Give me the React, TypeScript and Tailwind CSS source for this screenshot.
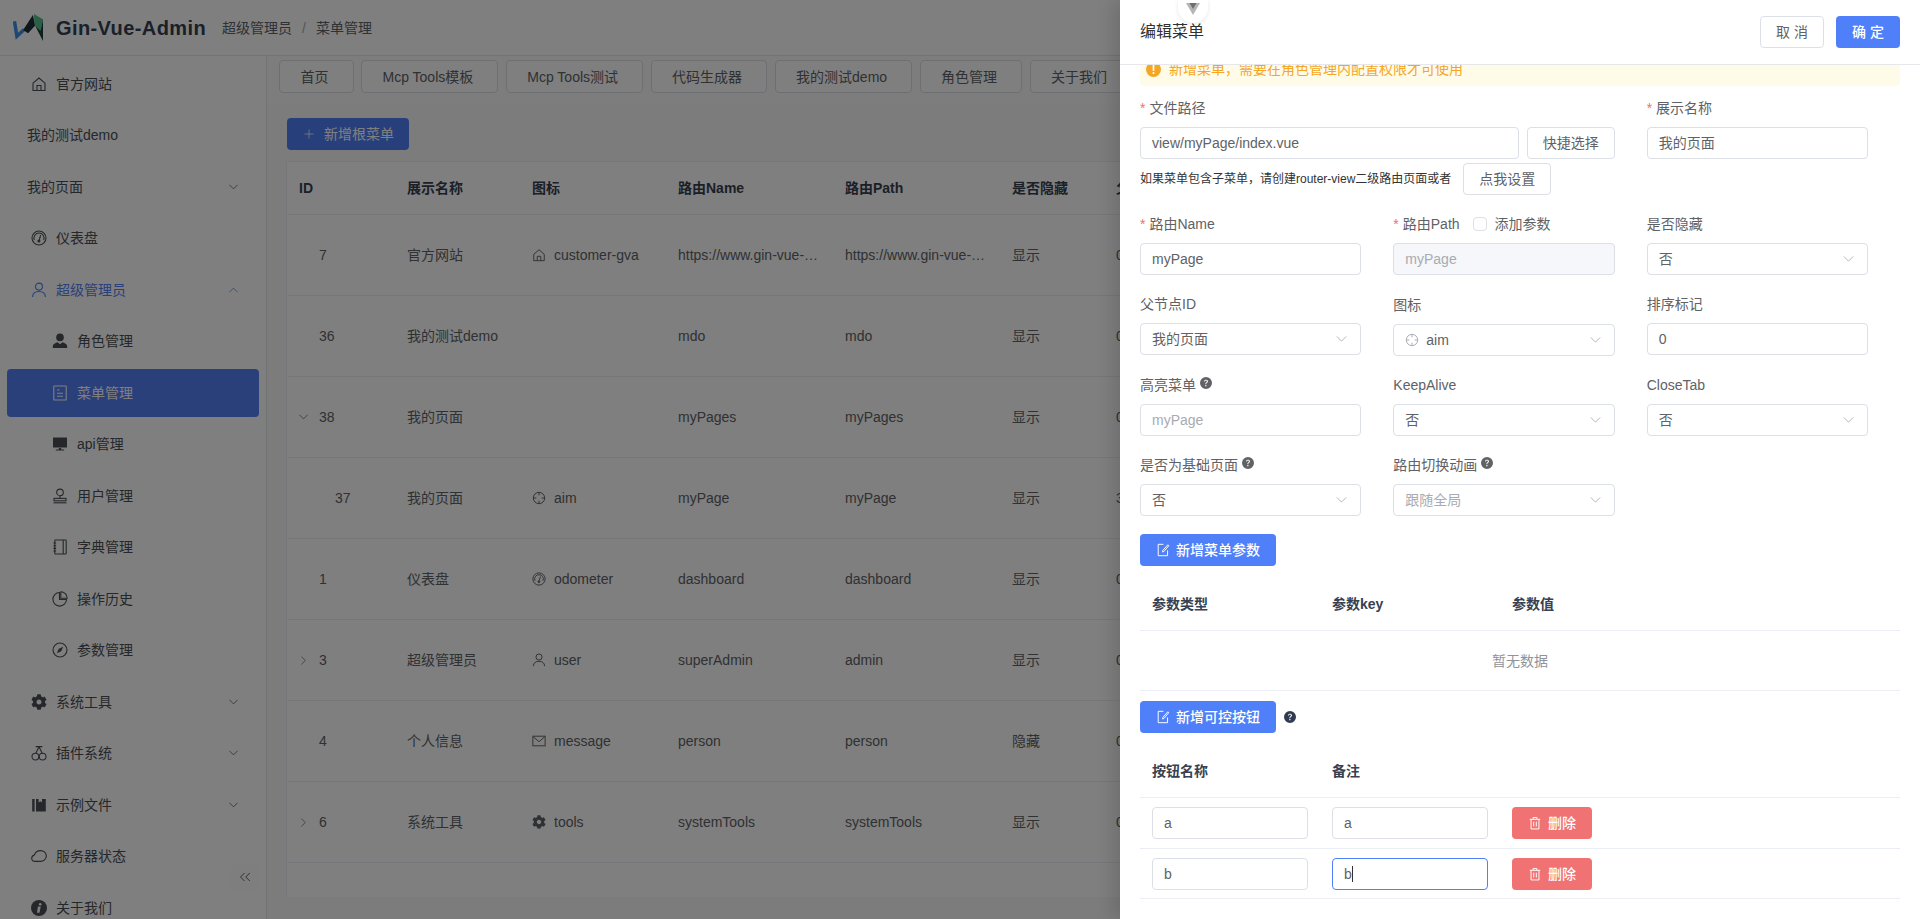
import React from "react"
import { ChevronsLeft, Plus } from "lucide-react"
import { FaCog } from "react-icons/fa"
import { BsQuestionCircleFill } from "react-icons/bs"

type IconProps = { className?: string }

const Svg = ({ className, children }: IconProps & { children: React.ReactNode }) => (
  <svg viewBox="0 0 16 16" fill="none" stroke="currentColor" strokeWidth="1.1" className={className}>
    {children}
  </svg>
)

const ArrowDown = ({ className }: IconProps) => (
  <svg viewBox="0 0 12 7" fill="none" stroke="currentColor" strokeWidth="1" className={className}>
    <path d="M.5.5 6 6l5.500-5.500" />
  </svg>
)
const ArrowUp = ({ className }: IconProps) => (
  <svg viewBox="0 0 12 7" fill="none" stroke="currentColor" strokeWidth="1" className={className}>
    <path d="M.5 6.500 6 1l5.500 5.500" />
  </svg>
)
const ArrowRight = ({ className }: IconProps) => (
  <svg viewBox="0 0 7 12" fill="none" stroke="currentColor" strokeWidth="1" className={className}>
    <path d="M.5.500 6 6 .5 11.500" />
  </svg>
)

const HomeIcon = ({ className }: IconProps) => (
  <Svg className={className}>
    <path d="M2 7.200 8 2l6 5.200V14.500H2z" />
    <path d="M6 14.500V9.500h4v5" />
  </Svg>
)
const OdometerIcon = ({ className }: IconProps) => (
  <Svg className={className}>
    <circle cx="8" cy="8" r="7" />
    <path d="M3.400 10a5 5 0 1 1 9.200 0" />
    <path d="M9.600 5.200 8.300 10" />
    <circle cx="7.900" cy="11" r="1" fill="currentColor" />
  </Svg>
)
const UserIcon = ({ className }: IconProps) => (
  <Svg className={className}>
    <circle cx="8" cy="4.600" r="3.500" />
    <path d="M1.600 15c0-3.600 2.600-5.500 6.400-5.500s6.400 1.900 6.400 5.500" />
  </Svg>
)
const AvatarIcon = ({ className }: IconProps) => (
  <svg viewBox="0 0 16 16" fill="currentColor" className={className}>
    <circle cx="8" cy="4.400" r="3.800" />
    <path d="M.8 15v-1.600c0-2.400 2.800-3.600 4.800-4.200L8 11.200l2.400-2c2 .6 4.800 1.800 4.800 4.200V15z" />
  </svg>
)
const DocumentIcon = ({ className }: IconProps) => (
  <Svg className={className}>
    <rect x="1.800" y="1" width="12.400" height="14" rx="0.500" />
    <path d="M5 5h2.500M5 8.200h6M5 11.200h6" />
  </Svg>
)
const MonitorIcon = ({ className }: IconProps) => (
  <svg viewBox="0 0 16 16" fill="currentColor" className={className}>
    <rect x="1" y="1.500" width="14" height="10" />
    <path d="M6.800 12h2.400v1.400h3v1H3.800v-1h3z" />
  </svg>
)
const StampIcon = ({ className }: IconProps) => (
  <Svg className={className}>
    <circle cx="8" cy="4.400" r="3.300" />
    <path d="M8 7.700v2.600" />
    <rect x="2" y="10.400" width="12" height="2.400" />
    <path d="M1.500 14.800h13" />
  </Svg>
)
const NotebookIcon = ({ className }: IconProps) => (
  <Svg className={className}>
    <rect x="2.800" y="1" width="11.400" height="14" rx="0.500" />
    <path d="M11.200 1v14M1.400 4h2.800M1.400 6.700h2.800M1.400 9.400h2.800M1.400 12h2.800" />
  </Svg>
)
const PieIcon = ({ className }: IconProps) => (
  <Svg className={className}>
    <path d="M7.500 1.500a6.800 6.800 0 1 0 7 7H7.500z" />
    <path d="M8.800 .8v6.400h6.400A6.400 6.400 0 0 0 8.800 .8z" />
  </Svg>
)
const CompassIcon = ({ className }: IconProps) => (
  <Svg className={className}>
    <circle cx="8" cy="8" r="7" />
    <path d="M11.200 4.800 9.200 9.200 4.800 11.200l2-4.400z" fill="currentColor" stroke="none" />
  </Svg>
)
const CherryIcon = ({ className }: IconProps) => (
  <Svg className={className}>
    <circle cx="4.400" cy="11.600" r="3.400" />
    <circle cx="11.600" cy="11.600" r="3.400" />
    <path d="M8 1.800 4.800 8.200M8 1.800l3.200 6.400M4.600 1.600h6.800" />
  </Svg>
)
const CollectionIcon = ({ className }: IconProps) => (
  <svg viewBox="0 0 16 16" fill="currentColor" className={className}>
    <rect x="1.200" y="2" width="2.400" height="12.500" />
    <path d="M5 2h2.600v3.400l1.700-1.200L11 5.400V2h3.800v12.500H5z" />
  </svg>
)
const CloudIcon = ({ className }: IconProps) => (
  <Svg className={className}>
    <path d="M4.200 13.400C2 13.400.7 12 .7 10.300c0-1.600 1.100-2.800 2.600-3.200C4.200 4.400 6.500 2.600 9.500 2.600c3.400 0 5.800 2.400 5.800 5.400 0 3.200-2.700 5.400-5.800 5.400z" />
  </Svg>
)
const InfoIcon = ({ className }: IconProps) => (
  <svg viewBox="0 0 16 16" className={className}>
    <circle cx="8" cy="8" r="8" fill="currentColor" />
    <circle cx="9.200" cy="4.200" r="1.300" fill="#fff" />
    <path d="M6.900 6.600h2.800L8.500 12.800H6z" fill="#fff" />
  </svg>
)
const AimIcon = ({ className }: IconProps) => (
  <Svg className={className}>
    <circle cx="8" cy="8" r="6.500" />
    <path d="M8 1.500V5M8 11v3.500M1.500 8H5M11 8h3.500" />
  </Svg>
)
const MessageIcon = ({ className }: IconProps) => (
  <Svg className={className}>
    <rect x="1" y="2.500" width="14" height="11" />
    <path d="M1.500 3.200 8 8.800l6.500-5.600" />
  </Svg>
)
const EditIcon = ({ className }: IconProps) => (
  <Svg className={className}>
    <path d="M13.200 8.500v6H2.500v-13h6" />
    <path d="M13.500 2 7.800 8.500l-.3 1.700 1.600-.5 5.400-6.500z" />
  </Svg>
)
const DeleteIcon = ({ className }: IconProps) => (
  <Svg className={className}>
    <path d="M2 3.800h12M5.800 3.800V1.800h4.400v2M3.500 3.800v11h9v-11M6.500 6.500v5.500M9.500 6.500v5.500" />
  </Svg>
)
const WarningIcon = ({ className }: IconProps) => (
  <svg viewBox="0 0 16 16" className={className}>
    <circle cx="8" cy="8" r="8" fill="currentColor" />
    <rect x="7.100" y="3.200" width="1.800" height="6.300" rx="0.500" fill="#fff" />
    <circle cx="8" cy="11.700" r="1.100" fill="#fff" />
  </svg>
)
const GvaLogo = () => (
  <svg viewBox="5 5 32 30" className="h-[29px] w-[31px]">
    <path d="M6.500 13.500 9 29l7.500-7" fill="none" stroke="#3f8fe8" strokeWidth="3.600" />
    <path d="M15.500 22.500 25.500 7l2.500 11-7.500 8z" fill="#1f2f38" />
    <path d="M26.500 6l9.500 5.500-2.500 13L27.500 18z" fill="#55c091" />
    <path d="M36 11.500V34l-8-15.500 5.500 5z" fill="#1d3f3a" />
  </svg>
)

type MenuItem = {
  label: string
  icon?: React.ComponentType<IconProps>
  sub?: boolean
  arrow?: "down" | "up"
  active?: boolean
  current?: boolean
}

const menu: MenuItem[] = [
  { label: "官方网站", icon: HomeIcon },
  { label: "我的测试demo" },
  { label: "我的页面", arrow: "down" },
  { label: "仪表盘", icon: OdometerIcon },
  { label: "超级管理员", icon: UserIcon, arrow: "up", active: true },
  { label: "角色管理", icon: AvatarIcon, sub: true },
  { label: "菜单管理", icon: DocumentIcon, sub: true, current: true },
  { label: "api管理", icon: MonitorIcon, sub: true },
  { label: "用户管理", icon: StampIcon, sub: true },
  { label: "字典管理", icon: NotebookIcon, sub: true },
  { label: "操作历史", icon: PieIcon, sub: true },
  { label: "参数管理", icon: CompassIcon, sub: true },
  { label: "系统工具", icon: FaCog, arrow: "down" },
  { label: "插件系统", icon: CherryIcon, arrow: "down" },
  { label: "示例文件", icon: CollectionIcon, arrow: "down" },
  { label: "服务器状态", icon: CloudIcon },
  { label: "关于我们", icon: InfoIcon },
]

const tabs = ["首页", "Mcp Tools模板", "Mcp Tools测试", "代码生成器", "我的测试demo", "角色管理", "关于我们"]

type Row = {
  id: string
  name: string
  icon?: React.ComponentType<IconProps>
  iconName?: string
  routeName: string
  routePath: string
  hidden: string
  parent: string
  expand?: "down" | "right"
  child?: boolean
}

const rows: Row[] = [
  { id: "7", name: "官方网站", icon: HomeIcon, iconName: "customer-gva", routeName: "https://www.gin-vue-…", routePath: "https://www.gin-vue-…", hidden: "显示", parent: "0" },
  { id: "36", name: "我的测试demo", routeName: "mdo", routePath: "mdo", hidden: "显示", parent: "0" },
  { id: "38", name: "我的页面", routeName: "myPages", routePath: "myPages", hidden: "显示", parent: "0", expand: "down" },
  { id: "37", name: "我的页面", icon: AimIcon, iconName: "aim", routeName: "myPage", routePath: "myPage", hidden: "显示", parent: "3", child: true },
  { id: "1", name: "仪表盘", icon: OdometerIcon, iconName: "odometer", routeName: "dashboard", routePath: "dashboard", hidden: "显示", parent: "0" },
  { id: "3", name: "超级管理员", icon: UserIcon, iconName: "user", routeName: "superAdmin", routePath: "admin", hidden: "显示", parent: "0", expand: "right" },
  { id: "4", name: "个人信息", icon: MessageIcon, iconName: "message", routeName: "person", routePath: "person", hidden: "隐藏", parent: "0" },
  { id: "6", name: "系统工具", icon: FaCog, iconName: "tools", routeName: "systemTools", routePath: "systemTools", hidden: "显示", parent: "0", expand: "right" },
]

const Sidebar = () => (
  <aside className="relative flex w-[267px] shrink-0 flex-col gap-[3.5px] overflow-hidden border-r border-[#e5e7eb] bg-white pt-[3.5px] text-sm text-[#4b4f55]">
    {menu.map((item) => {
      const Icon = item.icon
      return (
        <div
          key={item.label}
          className={`mx-[7px] flex h-12 shrink-0 items-center rounded-sm ${
            item.sub ? "pl-[45px]" : Icon ? "pl-6" : "pl-5"
          } ${item.current ? "bg-[#5480f5] text-white" : ""} ${item.active ? "text-[#5480f5]" : ""}`}
        >
          {Icon && <Icon className="mr-[9px] h-4 w-4 shrink-0" />}
          <span>{item.label}</span>
          {item.arrow === "down" && <ArrowDown className="ml-auto mr-[21px] h-[6px] w-[9px]" />}
          {item.arrow === "up" && <ArrowUp className="ml-auto mr-[21px] h-[6px] w-[9px]" />}
        </div>
      )
    })}
    <div className="absolute left-[231px] top-[807px] flex h-7 w-7 items-center justify-center rounded bg-[#fcfcfc] text-[#374151]">
      <ChevronsLeft className="h-[18px] w-[18px]" strokeWidth={1.1} />
    </div>
  </aside>
)

const MenuTable = () => (
  <div className="ml-[19px] mt-[11px] h-[736px] overflow-hidden">
    <table className="w-[1000px] table-fixed border-separate border-spacing-0 border-l border-t border-[#ebeef5] bg-white text-sm text-[#606266]">
      <colgroup>
        <col className="w-[108px]" />
        <col className="w-[125px]" />
        <col className="w-[146px]" />
        <col className="w-[167px]" />
        <col className="w-[167px]" />
        <col className="w-[104px]" />
        <col className="w-[183px]" />
      </colgroup>
      <thead>
        <tr className="font-bold text-[#374151]">
          {["ID", "展示名称", "图标", "路由Name", "路由Path", "是否隐藏", "父节点"].map((title) => (
            <th key={title} className="h-[53px] border-b border-[#ebeef5] px-3 text-left font-bold">
              {title}
            </th>
          ))}
        </tr>
      </thead>
      <tbody>
        {rows.map((row) => {
          const Icon = row.icon
          return (
            <tr key={row.id}>
              <td className="h-[81px] border-b border-[#ebeef5] px-3">
                <div className={`relative flex items-center ${row.child ? "pl-9" : "pl-5"}`}>
                  {row.expand === "down" && <ArrowDown className="absolute left-0 h-[6px] w-[9px]" />}
                  {row.expand === "right" && <ArrowRight className="absolute left-[2px] h-[9px] w-[5px]" />}
                  {row.id}
                </div>
              </td>
              <td className="border-b border-[#ebeef5] px-3">{row.name}</td>
              <td className="border-b border-[#ebeef5] px-3">
                {Icon && (
                  <div className="flex items-center gap-2">
                    <Icon className="h-3.5 w-3.5" />
                    {row.iconName}
                  </div>
                )}
              </td>
              <td className="whitespace-nowrap border-b border-[#ebeef5] px-3">{row.routeName}</td>
              <td className="whitespace-nowrap border-b border-[#ebeef5] px-3">{row.routePath}</td>
              <td className="border-b border-[#ebeef5] px-3">{row.hidden}</td>
              <td className="border-b border-[#ebeef5] px-3">{row.parent}</td>
            </tr>
          )
        })}
        <tr>
          <td className="h-[81px]" />
          <td />
          <td className="px-3">
            <HomeIcon className="h-3.5 w-3.5" />
          </td>
        </tr>
      </tbody>
    </table>
  </div>
)

const Label = ({ children, required, help, tall }: { children: React.ReactNode; required?: boolean; help?: boolean; tall?: boolean }) => (
  <div className={`mb-2 flex items-center text-sm text-[#606266] ${tall ? "h-[23px]" : "h-[22px]"}`}>
    {required && <span className="mr-1 text-[#f56c6c]">*</span>}
    {children}
    {help && <BsQuestionCircleFill className="mb-1 ml-1 h-3 w-3 text-[#606266]" />}
  </div>
)

const Input = ({ value, placeholder, disabled, className = "" }: { value?: string; placeholder?: boolean; disabled?: boolean; className?: string }) => (
  <div
    className={`flex h-8 items-center rounded border border-[#dcdfe6] px-[11px] text-sm ${
      disabled ? "bg-[#f5f7fa] text-[#a8abb2]" : placeholder ? "bg-white text-[#a8abb2]" : "bg-white text-[#606266]"
    } ${className}`}
  >
    {value}
  </div>
)

const Select = ({ value, placeholder, icon }: { value: string; placeholder?: boolean; icon?: boolean }) => (
  <div className={`flex h-8 items-center rounded border border-[#dcdfe6] bg-white pl-[11px] pr-[13px] text-sm ${placeholder ? "text-[#a8abb2]" : "text-[#606266]"}`}>
    {icon && <AimIcon className="mr-[7px] h-3.5 w-3.5 text-[#a8abb2]" />}
    {value}
    <ArrowDown className="ml-auto h-[6px] w-[11px] text-[#a8abb2]" />
  </div>
)

const Button = ({ children, className = "" }: { children: React.ReactNode; className?: string }) => (
  <button className={`flex h-8 items-center justify-center rounded border border-[#dcdfe6] bg-white text-sm text-[#606266] ${className}`}>
    {children}
  </button>
)

const PrimaryButton = ({ children }: { children: string }) => (
  <button className="flex h-8 w-[136px] items-center justify-center gap-1.5 rounded bg-[#4f80f9] text-sm font-medium text-white">
    <EditIcon className="h-3.5 w-3.5" />
    {children}
  </button>
)

const DeleteButton = () => (
  <button className="flex h-8 w-20 items-center justify-center gap-1.5 rounded bg-[#f07272] text-sm font-medium text-white">
    <DeleteIcon className="h-3.5 w-3.5" />
    删除
  </button>
)

const Drawer = () => (
  <div className="absolute inset-y-0 right-0 z-20 flex w-[800px] flex-col bg-white shadow-[-8px_0_16px_rgba(0,0,0,0.12)]">
    <div className="absolute left-[58px] top-0 z-10 flex h-[23px] w-[30px] justify-center rounded-b-full bg-white pt-[3px] shadow-[0_1px_4px_rgba(0,0,0,0.1)]">
      <svg viewBox="0 0 14 12" className="h-3 w-3.5">
        <path d="M0 0h14L7 12z" fill="#b5b5b5" />
        <path d="M3.500 0h7L7 6z" fill="#6e6e6e" />
      </svg>
    </div>
    <div className="flex h-[65px] shrink-0 items-center justify-between border-b border-[#e5e7eb] px-5">
      <span className="text-base text-[#303133]">编辑菜单</span>
      <div className="flex gap-3">
        <Button className="w-16">取 消</Button>
        <button className="flex h-8 w-16 items-center justify-center rounded bg-[#4f80f9] text-sm font-medium text-white">确 定</button>
      </div>
    </div>
    <div className="flex-1 overflow-hidden px-5">
      <div className="-mt-[13px] flex h-[34px] items-center rounded bg-[#fffbe9] pl-1.5 text-sm text-[#f5a623]">
        <WarningIcon className="mr-2 h-[15px] w-[15px]" />
        新增菜单，需要在角色管理内配置权限才可使用
      </div>

      <div className="mt-[11px] grid w-[728px] grid-cols-3 gap-x-8 gap-y-[18px]">
        <div className="col-span-2">
          <Label required>文件路径</Label>
          <div className="flex gap-2">
            <Input value="view/myPage/index.vue" className="w-[380px]" />
            <Button className="w-[88px]">快捷选择</Button>
          </div>
          <div className="mt-1 flex items-center">
            <span className="text-xs text-[#333]">如果菜单包含子菜单，请创建router-view二级路由页面或者</span>
            <Button className="ml-3 w-[88px]">点我设置</Button>
          </div>
        </div>
        <div>
          <Label required>展示名称</Label>
          <Input value="我的页面" />
        </div>

        <div>
          <Label required>路由Name</Label>
          <Input value="myPage" />
        </div>
        <div>
          <Label required>
            路由Path
            <span className="ml-[13px] mr-2 h-3.5 w-3.5 rounded-sm border border-[#dcdfe6] bg-white" />
            添加参数
          </Label>
          <Input value="myPage" disabled />
        </div>
        <div>
          <Label>是否隐藏</Label>
          <Select value="否" />
        </div>

        <div>
          <Label>父节点ID</Label>
          <Select value="我的页面" />
        </div>
        <div>
          <Label tall>图标</Label>
          <Select value="aim" icon />
        </div>
        <div>
          <Label>排序标记</Label>
          <Input value="0" />
        </div>

        <div>
          <Label help>高亮菜单</Label>
          <Input value="myPage" placeholder />
        </div>
        <div>
          <Label>KeepAlive</Label>
          <Select value="否" />
        </div>
        <div>
          <Label>CloseTab</Label>
          <Select value="否" />
        </div>

        <div>
          <Label help>是否为基础页面</Label>
          <Select value="否" />
        </div>
        <div>
          <Label help>路由切换动画</Label>
          <Select value="跟随全局" placeholder />
        </div>
      </div>

      <div className="mt-[18px]">
        <PrimaryButton>新增菜单参数</PrimaryButton>
      </div>

      <div className="mt-3 text-sm">
        <div className="grid h-[53px] grid-cols-[180px_180px_180px_1fr] items-center border-b border-[#ebeef5] font-bold text-[#374151]">
          <span className="px-3">参数类型</span>
          <span className="px-3">参数key</span>
          <span className="px-3">参数值</span>
        </div>
        <div className="flex h-[60px] items-center justify-center border-b border-[#ebeef5] text-[#909399]">暂无数据</div>
      </div>

      <div className="mt-[10px] flex items-center gap-2">
        <PrimaryButton>新增可控按钮</PrimaryButton>
        <BsQuestionCircleFill className="h-3 w-3 text-[#303a50]" />
      </div>

      <div className="mt-3 text-sm">
        <div className="grid h-[53px] grid-cols-[180px_180px_180px_1fr] items-center border-b border-[#ebeef5] font-bold text-[#374151]">
          <span className="px-3">按钮名称</span>
          <span className="px-3">备注</span>
        </div>
        <div className="grid h-[51px] grid-cols-[180px_180px_180px_1fr] items-center border-b border-[#ebeef5] px-3">
          <Input value="a" className="w-[156px]" />
          <Input value="a" className="w-[156px]" />
          <DeleteButton />
        </div>
        <div className="grid h-[50px] grid-cols-[180px_180px_180px_1fr] items-center border-b border-[#ebeef5] px-3">
          <Input value="b" className="w-[156px]" />
          <div className="flex h-8 w-[156px] items-center rounded border border-[#4f80f9] bg-white px-[11px] text-[#606266]">
            b<span className="h-4 w-px bg-[#303133]" />
          </div>
          <DeleteButton />
        </div>
      </div>
    </div>
  </div>
)

export default function App() {
  return (
    <div className="relative flex h-screen w-full flex-col overflow-hidden bg-white [font-family:'Liberation_Sans','Noto_Sans_CJK_SC',sans-serif]">
      <header className="flex h-14 shrink-0 items-center border-b border-[#e5e7eb] pl-[13px] shadow-[0_1px_2px_rgba(0,0,0,0.04)]">
        <GvaLogo />
        <span className="ml-3 text-xl font-bold tracking-[0.4px] text-[#334155]">Gin-Vue-Admin</span>
        <nav className="ml-4 flex gap-[10px] text-sm text-[#606266]">
          <span>超级管理员</span>
          <span className="text-[#a8abb2]">/</span>
          <span>菜单管理</span>
        </nav>
      </header>
      <div className="flex min-h-0 flex-1">
        <Sidebar />
        <main className="min-w-0 flex-1 overflow-hidden bg-[#f9f9f9]">
          <div className="flex h-[47px] gap-[7.5px] bg-[#fbfbfb] pl-3 pt-1">
            {tabs.map((tab) => (
              <div key={tab} className="flex h-[33px] shrink-0 items-center rounded-sm border border-[#dcdfe6] bg-white pl-[20.5px] pr-[24px] text-sm text-[#606266]">
                {tab}
              </div>
            ))}
          </div>
          <button className="ml-5 mt-[15px] flex h-8 w-[122px] items-center justify-center gap-2 rounded bg-[#4f80f9] text-sm text-white">
            <Plus className="h-3.5 w-3.5" strokeWidth={1.3} />
            新增根菜单
          </button>
          <MenuTable />
        </main>
      </div>
      <div className="absolute inset-0 z-10 bg-black/50" />
      <Drawer />
    </div>
  )
}
